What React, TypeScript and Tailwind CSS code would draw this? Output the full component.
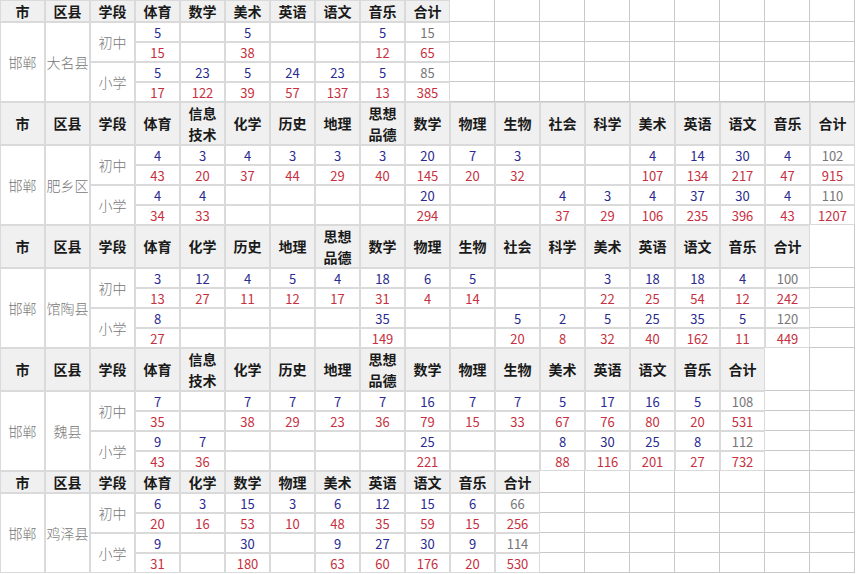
type Block = {
  district: string
  cols: string[]
  rows: string[][]
  tall: boolean
}

const blocks: Block[] = [
  {
    district: '大名县',
    cols: ['体育', '数学', '美术', '英语', '语文', '音乐', '合计'],
    tall: false,
    rows: [
      ['5', '', '5', '', '', '5', '15'],
      ['15', '', '38', '', '', '12', '65'],
      ['5', '23', '5', '24', '23', '5', '85'],
      ['17', '122', '39', '57', '137', '13', '385'],
    ],
  },
  {
    district: '肥乡区',
    cols: ['体育', '信息\n技术', '化学', '历史', '地理', '思想\n品德', '数学', '物理', '生物', '社会', '科学', '美术', '英语', '语文', '音乐', '合计'],
    tall: true,
    rows: [
      ['4', '3', '4', '3', '3', '3', '20', '7', '3', '', '', '4', '14', '30', '4', '102'],
      ['43', '20', '37', '44', '29', '40', '145', '20', '32', '', '', '107', '134', '217', '47', '915'],
      ['4', '4', '', '', '', '', '20', '', '', '4', '3', '4', '37', '30', '4', '110'],
      ['34', '33', '', '', '', '', '294', '', '', '37', '29', '106', '235', '396', '43', '1207'],
    ],
  },
  {
    district: '馆陶县',
    cols: ['体育', '化学', '历史', '地理', '思想\n品德', '数学', '物理', '生物', '社会', '科学', '美术', '英语', '语文', '音乐', '合计'],
    tall: true,
    rows: [
      ['3', '12', '4', '5', '4', '18', '6', '5', '', '', '3', '18', '18', '4', '100'],
      ['13', '27', '11', '12', '17', '31', '4', '14', '', '', '22', '25', '54', '12', '242'],
      ['8', '', '', '', '', '35', '', '', '5', '2', '5', '25', '35', '5', '120'],
      ['27', '', '', '', '', '149', '', '', '20', '8', '32', '40', '162', '11', '449'],
    ],
  },
  {
    district: '魏县',
    cols: ['体育', '信息\n技术', '化学', '历史', '地理', '思想\n品德', '数学', '物理', '生物', '美术', '英语', '语文', '音乐', '合计'],
    tall: true,
    rows: [
      ['7', '', '7', '7', '7', '7', '16', '7', '7', '5', '17', '16', '5', '108'],
      ['35', '', '38', '29', '23', '36', '79', '15', '33', '67', '76', '80', '20', '531'],
      ['9', '7', '', '', '', '', '25', '', '', '8', '30', '25', '8', '112'],
      ['43', '36', '', '', '', '', '221', '', '', '88', '116', '201', '27', '732'],
    ],
  },
  {
    district: '鸡泽县',
    cols: ['体育', '化学', '数学', '物理', '美术', '英语', '语文', '音乐', '合计'],
    tall: false,
    rows: [
      ['6', '3', '15', '3', '6', '12', '15', '6', '66'],
      ['20', '16', '53', '10', '48', '35', '59', '15', '256'],
      ['9', '', '30', '', '9', '27', '30', '9', '114'],
      ['31', '', '180', '', '63', '60', '176', '20', '530'],
    ],
  },
]

const TOTAL_COLS = 19

function HeadCell({ label }: { label: string }) {
  return (
    <div className="flex items-center justify-center border border-[#dadada] bg-[#f0f0f0] text-center text-[14px] font-bold leading-[21px] whitespace-pre-line text-[#1a1a1a]">
      {label}
    </div>
  )
}

function EmptyCell() {
  return <div className="border-r border-b border-[#c9c9c9]" />
}

function NumCell({ value, row, isTotal }: { value: string; row: number; isTotal: boolean }) {
  let color = row % 2 === 0 ? 'text-[#2a2a90]' : 'text-[#c63040]'
  if (isTotal && row % 2 === 0) color = 'text-[#777777]'
  return (
    <div className={`flex items-center justify-center border border-[#dadada] bg-white text-[13px] leading-none ${color}`}>
      {value}
    </div>
  )
}

function Table({ block }: { block: Block }) {
  const used = 3 + block.cols.length
  const empties = TOTAL_COLS - used
  const rowsClass = block.tall
    ? 'grid-rows-[43px_repeat(4,20px)]'
    : 'grid-rows-[22px_repeat(4,20px)]'

  return (
    <div className={`grid grid-cols-[repeat(19,45px)] ${rowsClass}`}>
      {/* header */}
      <HeadCell label="市" />
      <HeadCell label="区县" />
      <HeadCell label="学段" />
      {block.cols.map((c, i) => (
        <HeadCell key={i} label={c} />
      ))}
      {Array.from({ length: empties }).map((_, i) => (
        <EmptyCell key={`he${i}`} />
      ))}

      {block.rows.map((r, ri) => (
        <Row key={ri} ri={ri} values={r} block={block} empties={empties} />
      ))}
    </div>
  )
}

function Row({ ri, values, block, empties }: { ri: number; values: string[]; block: Block; empties: number }) {
  const side = 'flex items-center justify-center border border-[#dadada] bg-white text-[14px] font-light text-[#777777]'
  return (
    <>
      {ri === 0 && <div className={`row-span-4 ${side}`}>邯郸</div>}
      {ri === 0 && <div className={`row-span-4 ${side}`}>{block.district}</div>}
      {ri === 0 && <div className={`row-span-2 ${side}`}>初中</div>}
      {ri === 2 && <div className={`row-span-2 ${side}`}>小学</div>}
      {values.map((v, i) => (
        <NumCell key={i} value={v} row={ri} isTotal={i === values.length - 1} />
      ))}
      {Array.from({ length: empties }).map((_, i) => (
        <EmptyCell key={`e${i}`} />
      ))}
    </>
  )
}

export default function App() {
  return (
    <div className="w-[856px] h-[574px] overflow-hidden bg-white font-['Noto_Sans_CJK_SC','Microsoft_YaHei',sans-serif]">
      <div className="flex flex-col">
        {blocks.map((b, i) => (
          <Table key={i} block={b} />
        ))}
      </div>
    </div>
  )
}
